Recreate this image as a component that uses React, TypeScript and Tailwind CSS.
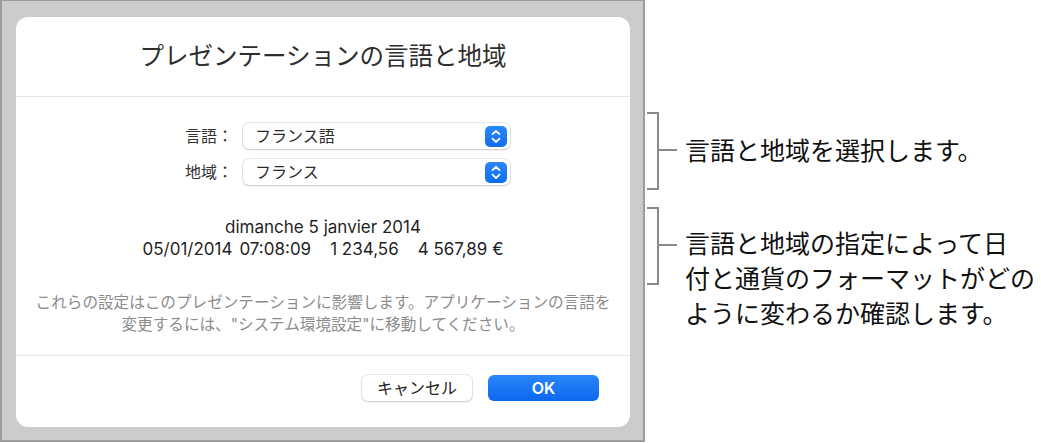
import React from 'react';

const font = "font-['Inter','Noto_Sans_CJK_JP',sans-serif]";

const Stepper: React.FC = () => (
  <div className="w-[22px] h-[21px] rounded-[5px] bg-gradient-to-b from-[#2a86f8] to-[#0f6cf2] flex items-center justify-center">
    <svg width="22" height="21" viewBox="0 0 22 21" fill="none">
      <path d="M7.5 8.2 L11 4.8 L14.5 8.2" stroke="white" strokeWidth="1.8" strokeLinecap="round" strokeLinejoin="round" />
      <path d="M7.5 12.6 L11 16 L14.5 12.6" stroke="white" strokeWidth="1.8" strokeLinecap="round" strokeLinejoin="round" />
    </svg>
  </div>
);

const SelectRow: React.FC<{ label: string; value: string }> = ({ label, value }) => (
  <div className="flex items-center h-[26px]">
    <span className="w-[48px] text-[16px] text-[#333]">{label}</span>
    <div className="ml-[10px] w-[267px] h-[26px] bg-white rounded-[6px] shadow-[0_0_0_1px_rgba(0,0,0,0.09),0_1px_2px_rgba(0,0,0,0.14)] flex items-center justify-between pl-[12px] pr-[3px]">
      <span className="text-[16px] text-[#2a2a2a]">{value}</span>
      <Stepper />
    </div>
  </div>
);

const Bracket: React.FC<{ h: string; tickTop: string }> = ({ h, tickTop }) => (
  <div className={`flex items-start ${h}`}>
    <div className="w-[12px] h-full border-y-2 border-r-2 border-[#8a8a8a]" />
    <div className={`w-[18px] h-[2px] bg-[#8a8a8a] ${tickTop}`} />
  </div>
);

export default function App() {
  return (
    <div className={`w-[1041px] h-[443px] bg-white flex ${font}`}>
      {/* screenshot frame */}
      <div className="w-[645px] h-[442px] bg-[#cccccc] border-l-2 border-r-2 border-t border-b-2 border-[#9c9c9c] pl-[14px] pt-[16px]">
        <div className="w-[614px] h-[410px] bg-white rounded-[12px] flex flex-col">
          <div className="h-[79px] flex items-center justify-center">
            <h1 className="text-[24.5px] text-[#2e2e2e] leading-none">プレゼンテーションの言語と地域</h1>
          </div>
          <div className="h-px bg-[#e6e6e6]" />
          <div className="h-[258px] flex flex-col pt-[26px]">
            <div className="flex flex-col gap-[10px] pl-[169px]">
              <SelectRow label="言語：" value="フランス語" />
              <SelectRow label="地域：" value="フランス" />
            </div>
            <div className="mt-[31px] flex flex-col items-center text-[17px] text-[#1f1f1f] leading-[22px]">
              <div>dimanche 5 janvier 2014</div>
              <div className="flex">
                <span>05/01/2014</span>
                <span className="ml-[7px]">07:08:09</span>
                <span className="ml-[19px]">1 234,56</span>
                <span className="ml-[19px]">4 567,89 €</span>
              </div>
            </div>
            <div className="mt-[32px] flex flex-col items-center text-[15.6px] text-[#8c8c8c] leading-[22px]">
              <div>これらの設定はこのプレゼンテーションに影響します。アプリケーションの言語を</div>
              <div>変更するには、"システム環境設定"に移動してください。</div>
            </div>
          </div>
          <div className="h-px bg-[#e6e6e6]" />
          <div className="flex justify-end gap-[16px] pt-[19px] pr-[31px]">
            <button className="w-[110px] h-[26px] bg-white rounded-[6px] shadow-[0_0_0_1px_rgba(0,0,0,0.09),0_1px_2px_rgba(0,0,0,0.14)] text-[16px] text-[#222]">
              キャンセル
            </button>
            <button className="w-[111px] h-[26px] rounded-[6px] bg-gradient-to-b from-[#2a86f8] to-[#0b68f0] text-[16px] font-semibold text-white">
              OK
            </button>
          </div>
        </div>
      </div>

      {/* annotations */}
      <div className="flex flex-col pl-[2px] pt-[112px]">
        <div className="flex items-center">
          <Bracket h="h-[78px]" tickTop="mt-[37px]" />
          <span className="ml-[8px] text-[25px] text-[#111] leading-none">言語と地域を選択します。</span>
        </div>
        <div className="flex items-start mt-[17px]">
          <Bracket h="h-[78px]" tickTop="mt-[37px]" />
          <div className="ml-[8px] mt-[20px] text-[25px] text-[#111] leading-[35px]">
            言語と地域の指定によって日
            <br />
            付と通貨のフォーマットがどの
            <br />
            ように変わるか確認します。
          </div>
        </div>
      </div>
    </div>
  );
}
